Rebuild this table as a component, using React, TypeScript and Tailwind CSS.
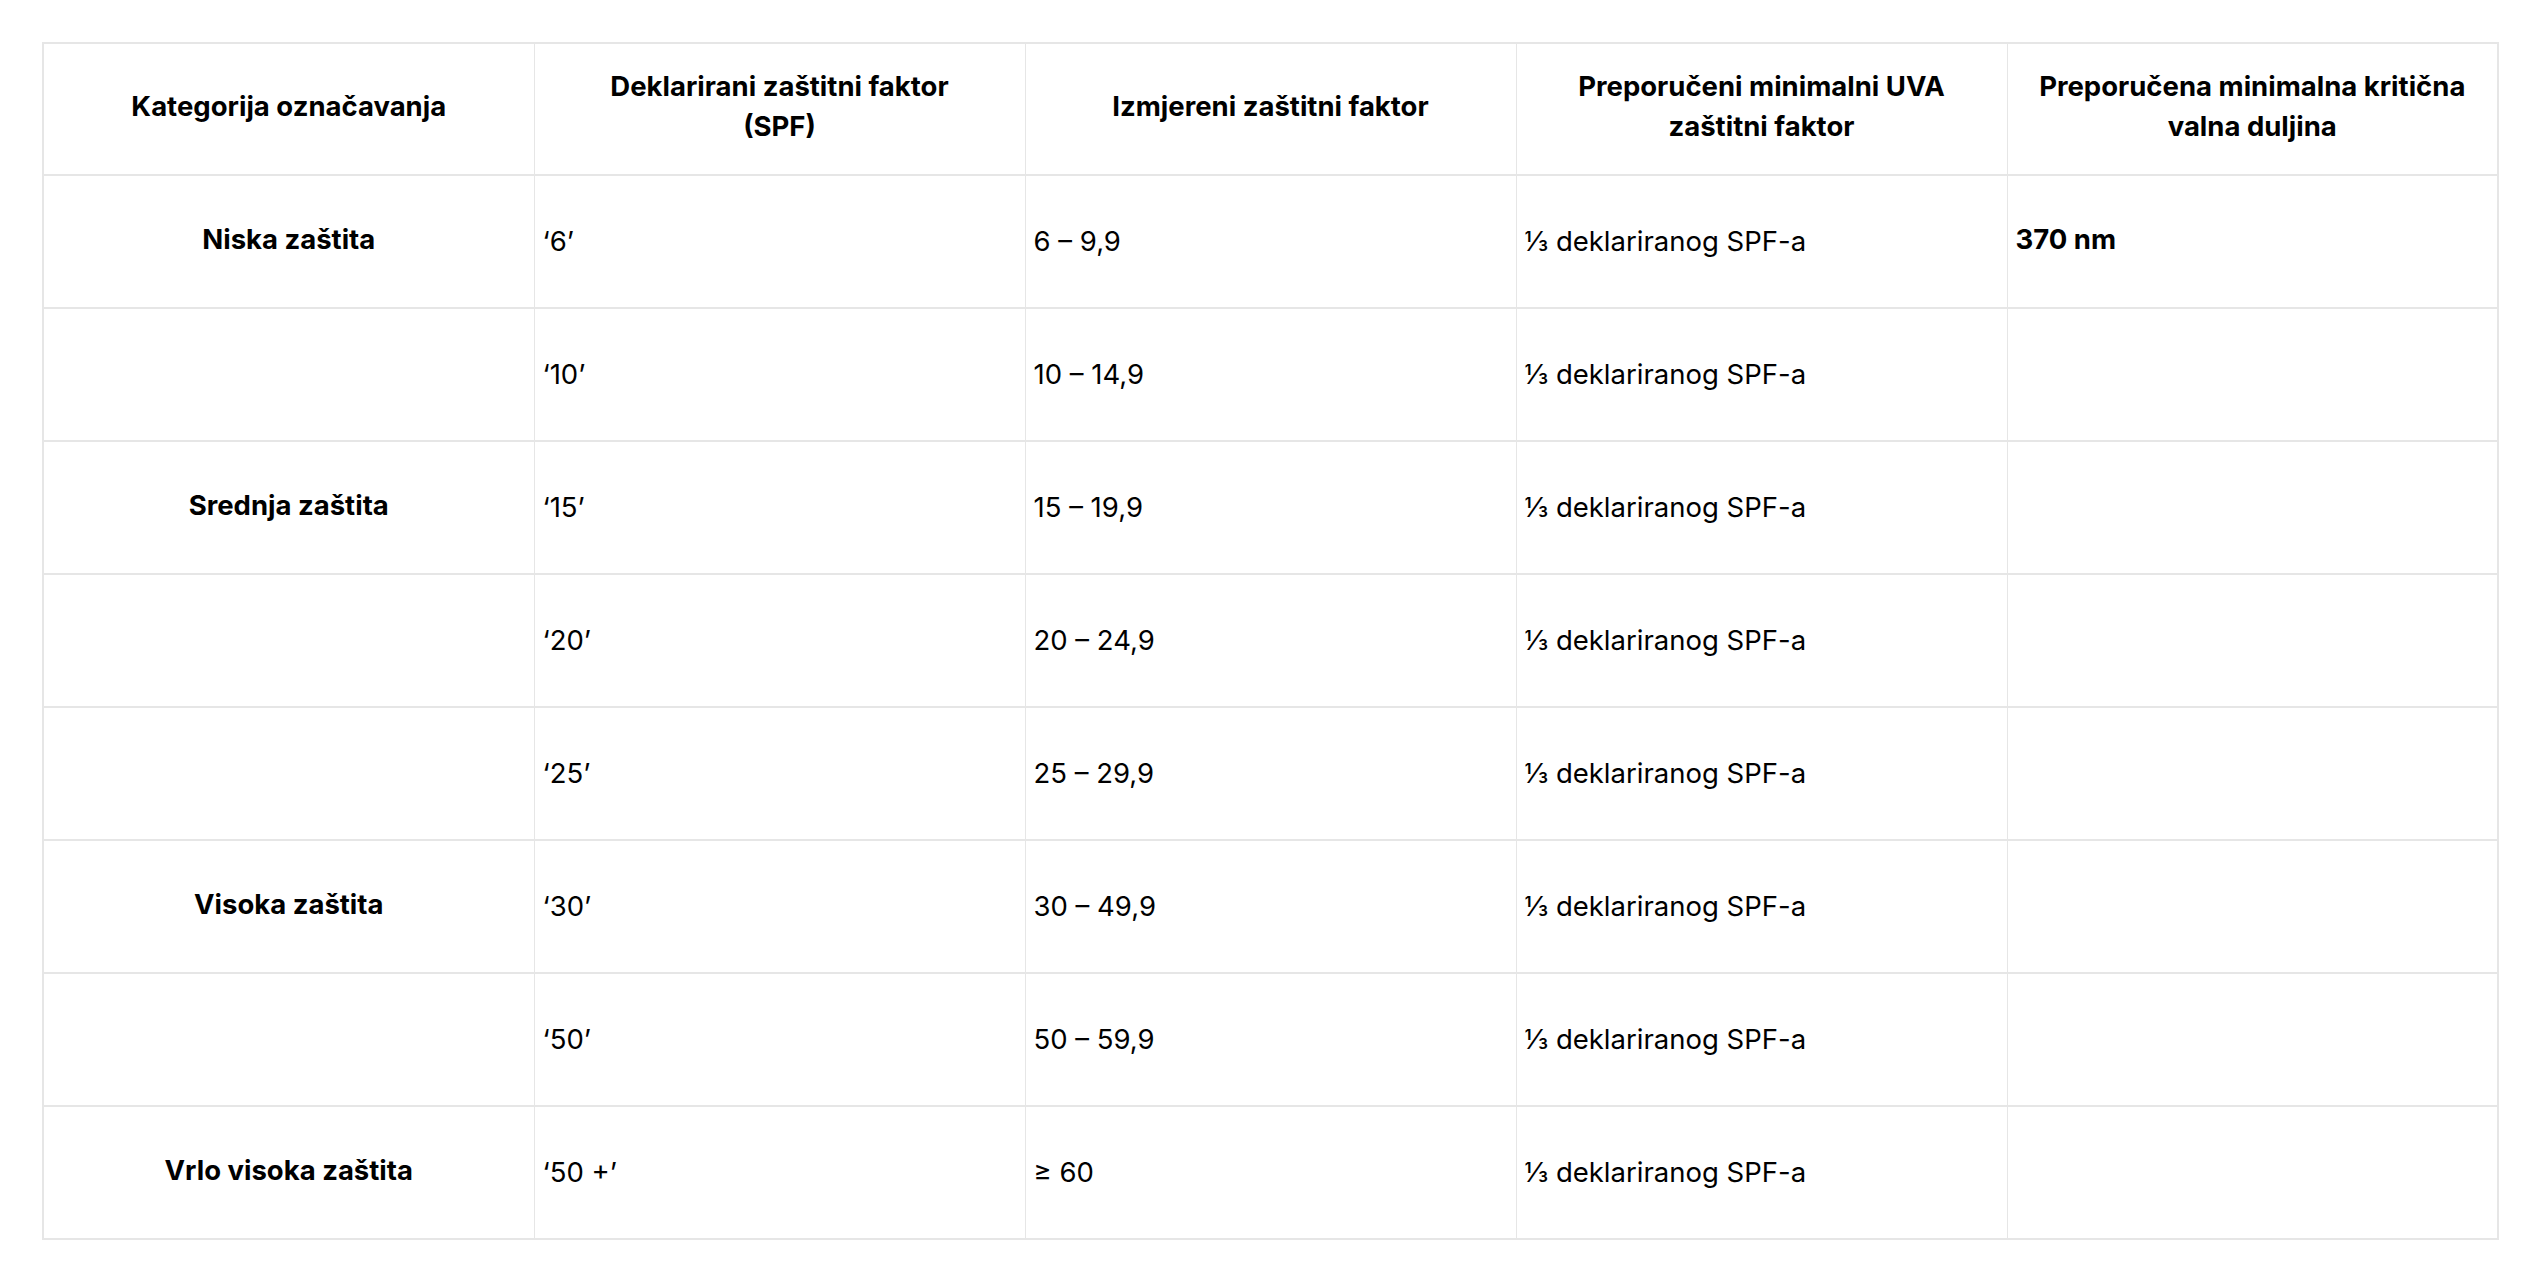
import React from "react";

const rows: { cat: string; spf: string; measured: string; uva: string; wave: string }[] = [
  { cat: "Niska zaštita", spf: "‘6’", measured: "6 – 9,9", uva: "⅓ deklariranog SPF-a", wave: "370 nm" },
  { cat: "", spf: "‘10’", measured: "10 – 14,9", uva: "⅓ deklariranog SPF-a", wave: "" },
  { cat: "Srednja zaštita", spf: "‘15’", measured: "15 – 19,9", uva: "⅓ deklariranog SPF-a", wave: "" },
  { cat: "", spf: "‘20’", measured: "20 – 24,9", uva: "⅓ deklariranog SPF-a", wave: "" },
  { cat: "", spf: "‘25’", measured: "25 – 29,9", uva: "⅓ deklariranog SPF-a", wave: "" },
  { cat: "Visoka zaštita", spf: "‘30’", measured: "30 – 49,9", uva: "⅓ deklariranog SPF-a", wave: "" },
  { cat: "", spf: "‘50’", measured: "50 – 59,9", uva: "⅓ deklariranog SPF-a", wave: "" },
  { cat: "Vrlo visoka zaštita", spf: "‘50 +’", measured: "≥ 60", uva: "⅓ deklariranog SPF-a", wave: "" },
];

export default function App() {
  return (
    <div
      className="min-h-[1280px] w-[2540px] bg-white pl-[42px] pt-[42px] text-black"
      style={{ fontFamily: "Inter, 'Noto Sans', sans-serif" }}
    >
      <table className="w-[2455px] table-fixed border-collapse border-2 border-[#e6e6e6] text-[27.5px]">
        <colgroup>
          <col className="w-[491px]" />
          <col className="w-[491px]" />
          <col className="w-[491px]" />
          <col className="w-[491px]" />
          <col className="w-[491px]" />
        </colgroup>
        <thead>
          <tr className="h-[132px] border-b-2 border-[#e6e6e6]">
            <th className="border-r border-[#e6e6e6] px-2 pb-[6px] text-center font-bold leading-[40px]">
              Kategorija označavanja
            </th>
            <th className="border-r border-[#e6e6e6] px-2 pb-[6px] text-center font-bold leading-[40px]">
              Deklarirani zaštitni faktor
              <br />
              (SPF)
            </th>
            <th className="border-r border-[#e6e6e6] px-2 pb-[6px] text-center font-bold leading-[40px]">
              Izmjereni zaštitni faktor
            </th>
            <th className="border-r border-[#e6e6e6] px-2 pb-[6px] text-center font-bold leading-[40px]">
              Preporučeni minimalni UVA
              <br />
              zaštitni faktor
            </th>
            <th className="px-1 pb-[6px] text-center font-bold leading-[40px]">
              Preporučena minimalna kritična
              <br />
              valna duljina
            </th>
          </tr>
        </thead>
        <tbody>
          {rows.map((r, i) => (
            <tr key={i} className="h-[133px] border-b-2 border-[#e6e6e6]">
              <td className="border-r border-[#e6e6e6] px-2 pb-1 text-center font-bold">{r.cat}</td>
              <td className="border-r border-[#e6e6e6] px-[8px]">{r.spf}</td>
              <td className="border-r border-[#e6e6e6] px-[8px]">{r.measured}</td>
              <td className="border-r border-[#e6e6e6] px-[8px]">{r.uva}</td>
              <td className="px-[8px] pb-1 font-bold">{r.wave}</td>
            </tr>
          ))}
        </tbody>
      </table>
    </div>
  );
}
